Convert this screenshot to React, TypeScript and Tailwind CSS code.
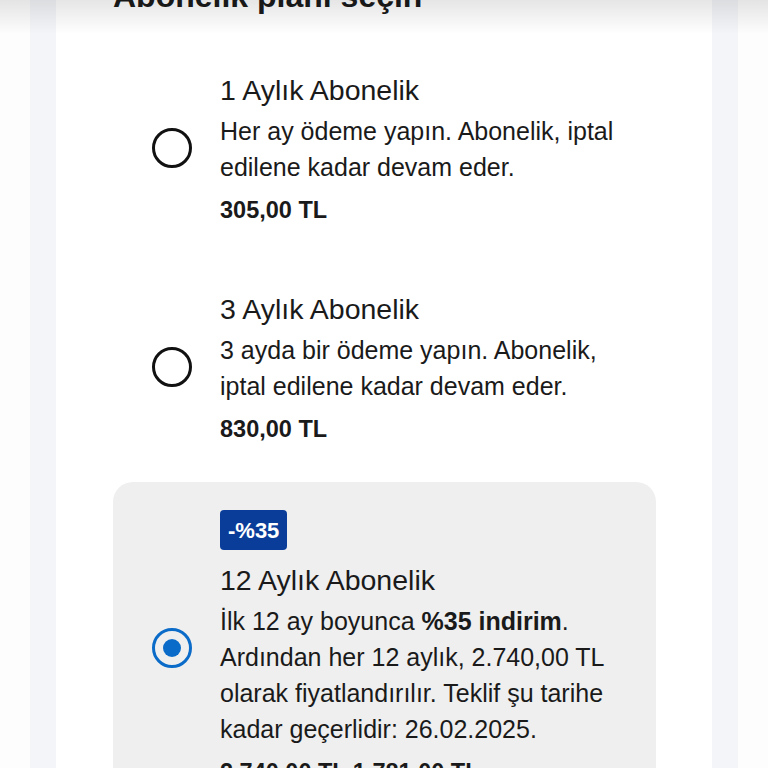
import React, { useState } from "react";

type Plan = {
  id: string;
  badge?: string;
  title: string;
  desc: React.ReactNode;
  price: React.ReactNode;
};

const PLANS: Plan[] = [
  {
    id: "1m",
    title: "1 Aylık Abonelik",
    desc: "Her ay ödeme yapın. Abonelik, iptal edilene kadar devam eder.",
    price: "305,00 TL",
  },
  {
    id: "3m",
    title: "3 Aylık Abonelik",
    desc: "3 ayda bir ödeme yapın. Abonelik, iptal edilene kadar devam eder.",
    price: "830,00 TL",
  },
  {
    id: "12m",
    badge: "-%35",
    title: "12 Aylık Abonelik",
    desc: (
      <>
        İlk 12 ay boyunca <span className="font-bold">%35 indirim</span>. Ardından her 12 aylık, 2.740,00 TL
        olarak fiyatlandırılır. Teklif şu tarihe kadar geçerlidir: 26.02.2025.
      </>
    ),
    price: (
      <>
        <span className="line-through">2.740,00 TL</span> 1.781,00 TL
      </>
    ),
  },
];

function Radio({ checked }: { checked: boolean }) {
  if (checked) {
    return (
      <span className="flex h-10 w-10 shrink-0 items-center justify-center rounded-full border-[3px] border-[#0b6bc8]">
        <span className="h-[18px] w-[18px] rounded-full bg-[#0b6bc8]" />
      </span>
    );
  }
  return <span className="h-10 w-10 shrink-0 rounded-full border-[3px] border-[#111111]" />;
}

export default function App() {
  const [selected, setSelected] = useState("12m");

  return (
    <div
      className="relative flex h-[768px] flex-col overflow-hidden bg-[#fdfdfd] text-[#1a1a1a]"
      style={{ fontFamily: '"Liberation Sans", Arial, sans-serif' }}
    >
      <div className="mx-[30px] flex flex-1 flex-col bg-[#f4f5f8] px-[26px]">
        <div className="flex flex-1 flex-col bg-white pl-[57px] pr-[56px]">
          <h1 className="-mt-[22px] text-[32px] font-bold leading-[36px]">Abonelik planı seçin</h1>

          <div className="mt-[30px] flex flex-col gap-[11px]">
            {PLANS.map((p) => {
              const on = selected === p.id;
              return (
                <button
                  key={p.id}
                  type="button"
                  onClick={() => setSelected(p.id)}
                  className={`flex items-center gap-7 rounded-[20px] py-7 pl-[39px] pr-[34px] text-left ${
                    on ? "bg-[#efefef]" : "bg-transparent"
                  }`}
                >
                  <Radio checked={on} />
                  <div className="flex-1">
                    {p.badge && (
                      <span className="mb-3 inline-flex h-10 items-center rounded-[4px] bg-[#0a3d9a] px-[8px] text-[22px] font-bold text-white">
                        {p.badge}
                      </span>
                    )}
                    <div className="text-[28.5px] leading-[36px]">{p.title}</div>
                    <p className="mt-[5px] text-[25px] leading-[36px]">{p.desc}</p>
                    <div className="mt-[11px] text-[23.5px] font-bold leading-[28px]">{p.price}</div>
                  </div>
                </button>
              );
            })}
          </div>
        </div>
      </div>

      <div className="pointer-events-none absolute inset-x-0 top-0 h-[34px] bg-linear-to-b from-black/10 to-transparent" />
    </div>
  );
}
